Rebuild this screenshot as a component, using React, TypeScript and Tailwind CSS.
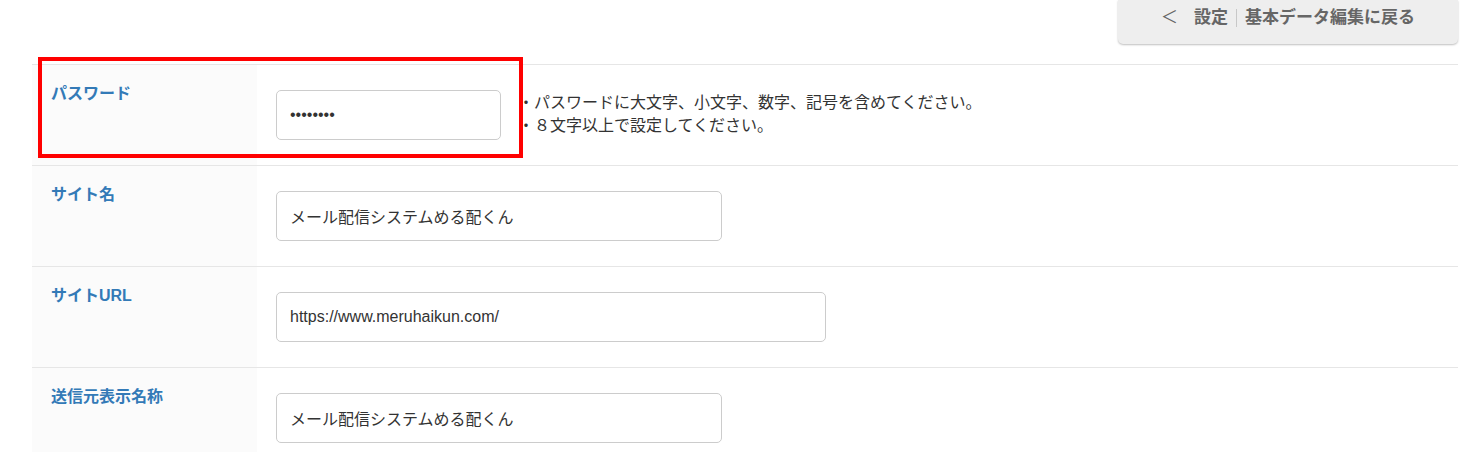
import React from 'react';

const jp = { fontFamily: '"Liberation Sans", "Noto Sans CJK JP", sans-serif' };

interface RowProps {
  label: string;
  children: React.ReactNode;
}

function FormRow({ label, children }: RowProps) {
  return (
    <div className="flex border-t border-[#e6e6e6]">
      <div className="w-[225px] shrink-0 bg-[#fbfbfb] pl-[19px] pt-[17px]">
        <span className="text-[16px] font-bold text-[#337ab7] leading-[22px]">{label}</span>
      </div>
      <div className="flex flex-1 items-center pl-[19px] py-[25px]">{children}</div>
    </div>
  );
}

function TextBox({ value, width, type = 'text' }: { value: string; width: string; type?: string }) {
  return (
    <input
      type={type}
      defaultValue={value}
      readOnly
      className={`${width} h-[50px] rounded-[5px] border border-[#cccccc] bg-white px-[13px] text-[16px] text-[#333] outline-none`}
      style={jp}
    />
  );
}

export default function App() {
  return (
    <div className="relative h-[452px] w-[1465px] overflow-hidden bg-white" style={jp}>
      <div className="ml-[32px] mr-[7px]">
        <div className="flex h-[64px] justify-end">
          <button className="flex h-[44px] w-[340px] items-start justify-center gap-[16px] rounded-b-[5px] bg-[#eeeeee] pt-[5px] text-[17px] font-bold text-[#666] shadow-[0_1px_2px_rgba(0,0,0,0.25)]">
            <span className="font-normal">＜</span>
            <span className="flex items-center">
              設定
              <span className="mx-[8px] h-[18px] w-px bg-[#c8c8c8]" />
              基本データ編集に戻る
            </span>
          </button>
        </div>

        <FormRow label="パスワード">
          <TextBox value="12345678" width="w-[225px]" type="password" />
          <div className="ml-[17px] text-[16px] leading-[23px] text-[#333] -mt-[3px]">
            <p>・パスワードに大文字、小文字、数字、記号を含めてください。</p>
            <p>・８文字以上で設定してください。</p>
          </div>
        </FormRow>
        <FormRow label="サイト名">
          <TextBox value="メール配信システムめる配くん" width="w-[446px]" />
        </FormRow>
        <FormRow label="サイトURL">
          <TextBox value="https://www.meruhaikun.com/" width="w-[550px]" />
        </FormRow>
        <FormRow label="送信元表示名称">
          <TextBox value="メール配信システムめる配くん" width="w-[446px]" />
        </FormRow>
      </div>

      {/* annotation frame */}
      <div className="pointer-events-none absolute left-[38px] top-[57px] h-[101px] w-[485px] border-[4px] border-[#ff0000]" />
    </div>
  );
}
